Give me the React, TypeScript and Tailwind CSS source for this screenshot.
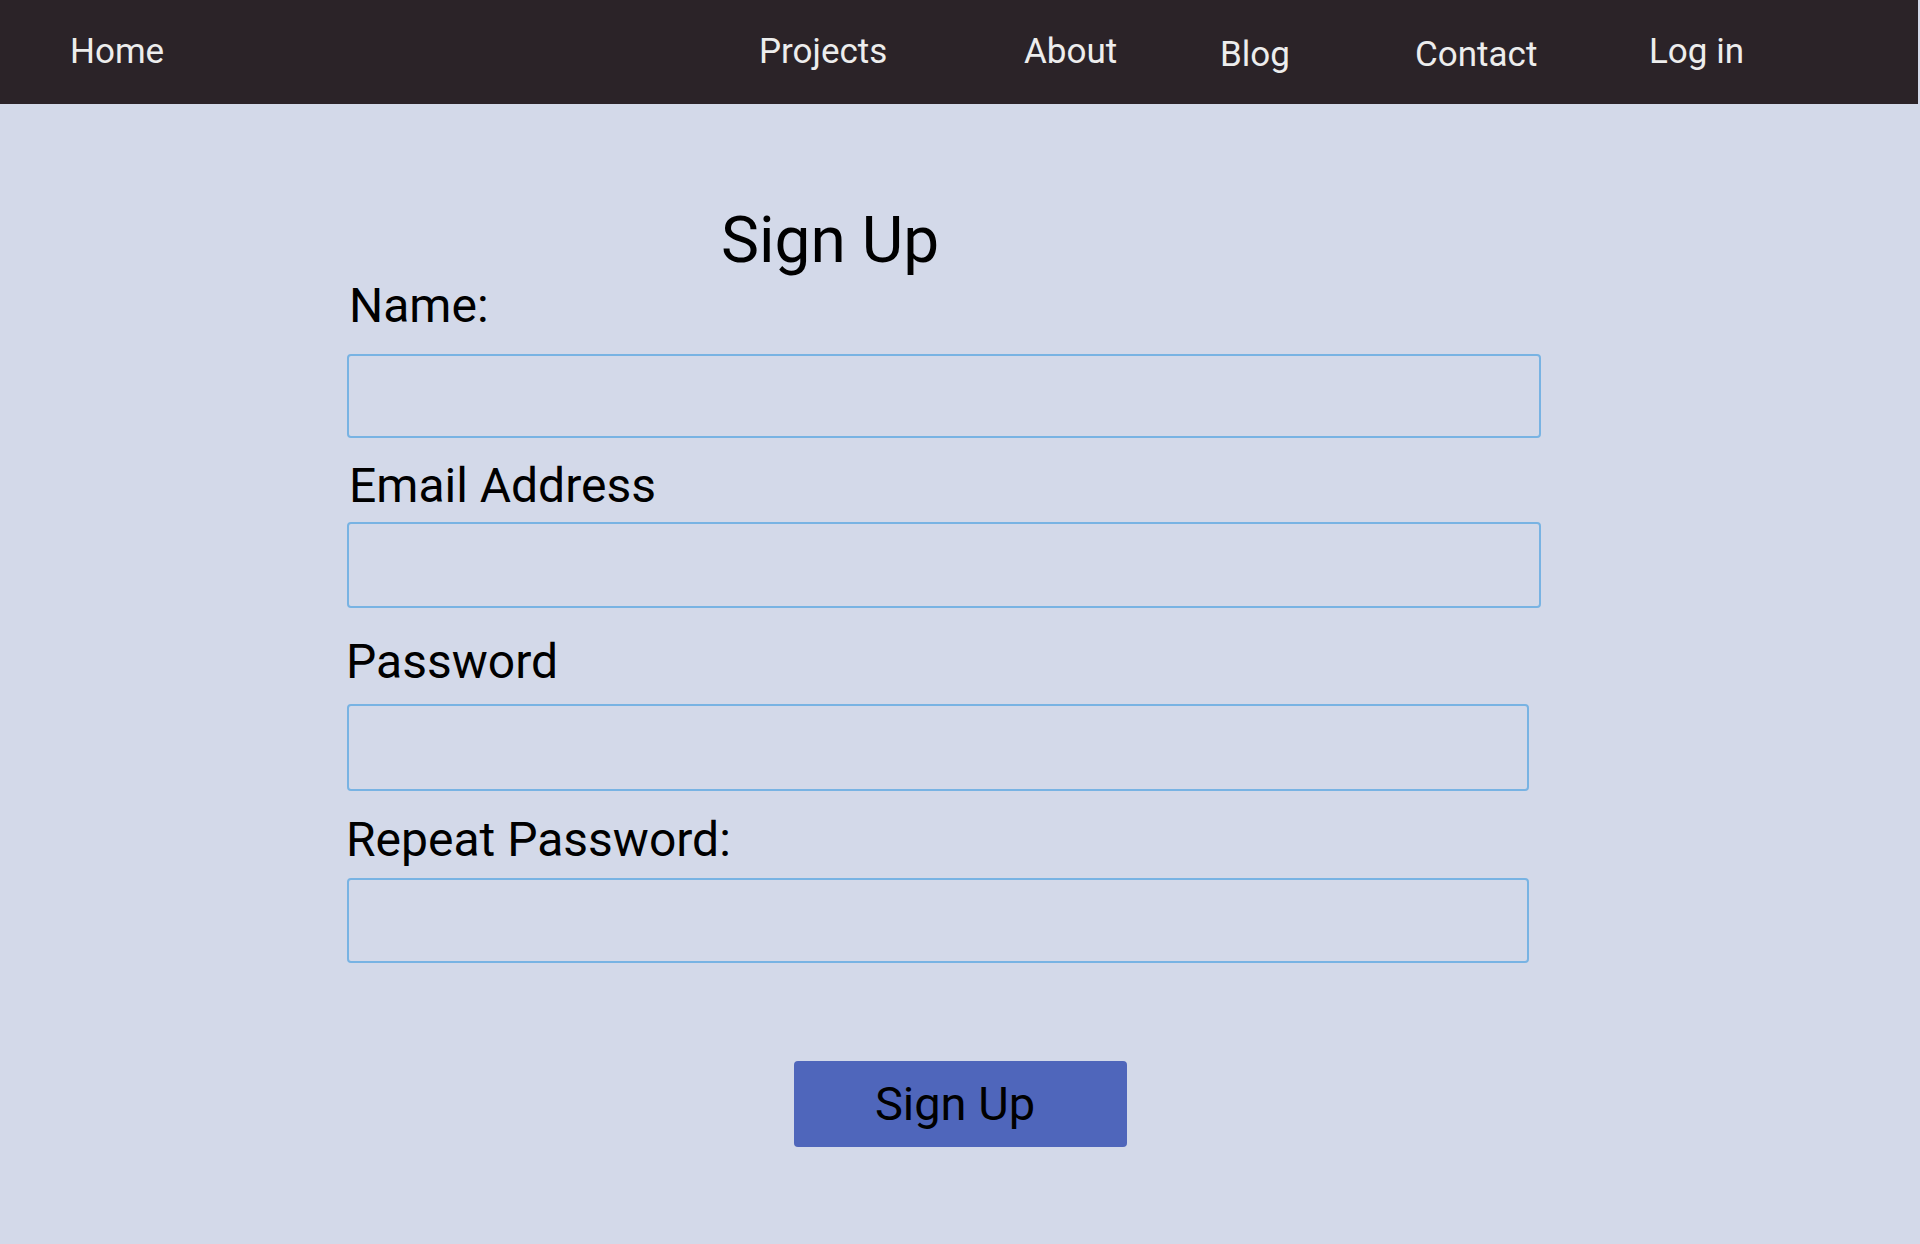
import React from "react";

const links = [
  { label: "Projects", w: "w-[265px]", pt: "pt-[34px]" },
  { label: "About", w: "w-[196px]", pt: "pt-[34px]" },
  { label: "Blog", w: "w-[195px]", pt: "pt-[37px]" },
  { label: "Contact", w: "w-[234px]", pt: "pt-[37px]" },
  { label: "Log in", w: "w-[160px]", pt: "pt-[34px]" },
];

export default function App() {
  return (
    <div className="min-h-screen w-full bg-[#d3d9e9] font-['Roboto',sans-serif]">
      {/* Top navigation */}
      <nav className="flex h-[104px] w-[1918px] items-start bg-[#2b2328] text-[35px] leading-[35px] text-[#ededed]">
        <div className="w-[759px] pl-[70px] pt-[34px]">Home</div>
        {links.map((l) => (
          <div key={l.label} className={`${l.w} ${l.pt}`}>
            {l.label}
          </div>
        ))}
      </nav>

      <main className="flex flex-col text-black">
        <form className="flex flex-col pl-[343px]" onSubmit={(e) => e.preventDefault()}>
          <h1 className="ml-[378px] mt-[105px] text-[64px] leading-[64px] font-normal">Sign Up</h1>

          <label className="ml-[6px] mt-[9px] text-[48px] leading-[48px]">Name:</label>
          <input className="ml-[4px] mt-[24px] h-[84px] w-[1194px] rounded-[4px] border-2 border-[#78b3e3] bg-transparent outline-none" />

          <label className="ml-[6px] mt-[24px] text-[48px] leading-[48px]">Email Address</label>
          <input className="ml-[4px] mt-[12px] h-[86px] w-[1194px] rounded-[4px] border-2 border-[#78b3e3] bg-transparent outline-none" />

          <label className="ml-[3px] mt-[30px] text-[48px] leading-[48px]">Password</label>
          <input
            type="password"
            className="ml-[4px] mt-[18px] h-[87px] w-[1182px] rounded-[4px] border-2 border-[#78b3e3] bg-transparent outline-none"
          />

          <label className="ml-[3px] mt-[25px] text-[48px] leading-[48px]">Repeat Password:</label>
          <input
            type="password"
            className="ml-[4px] mt-[14px] h-[85px] w-[1182px] rounded-[4px] border-2 border-[#78b3e3] bg-transparent outline-none"
          />
        </form>

        <div className="mt-[98px] flex justify-center">
          <button className="h-[86px] w-[333px] rounded-[4px] bg-[#4f66bb] pr-[10px] text-[47px] leading-[48px] text-black">
            Sign Up
          </button>
        </div>
      </main>
    </div>
  );
}
